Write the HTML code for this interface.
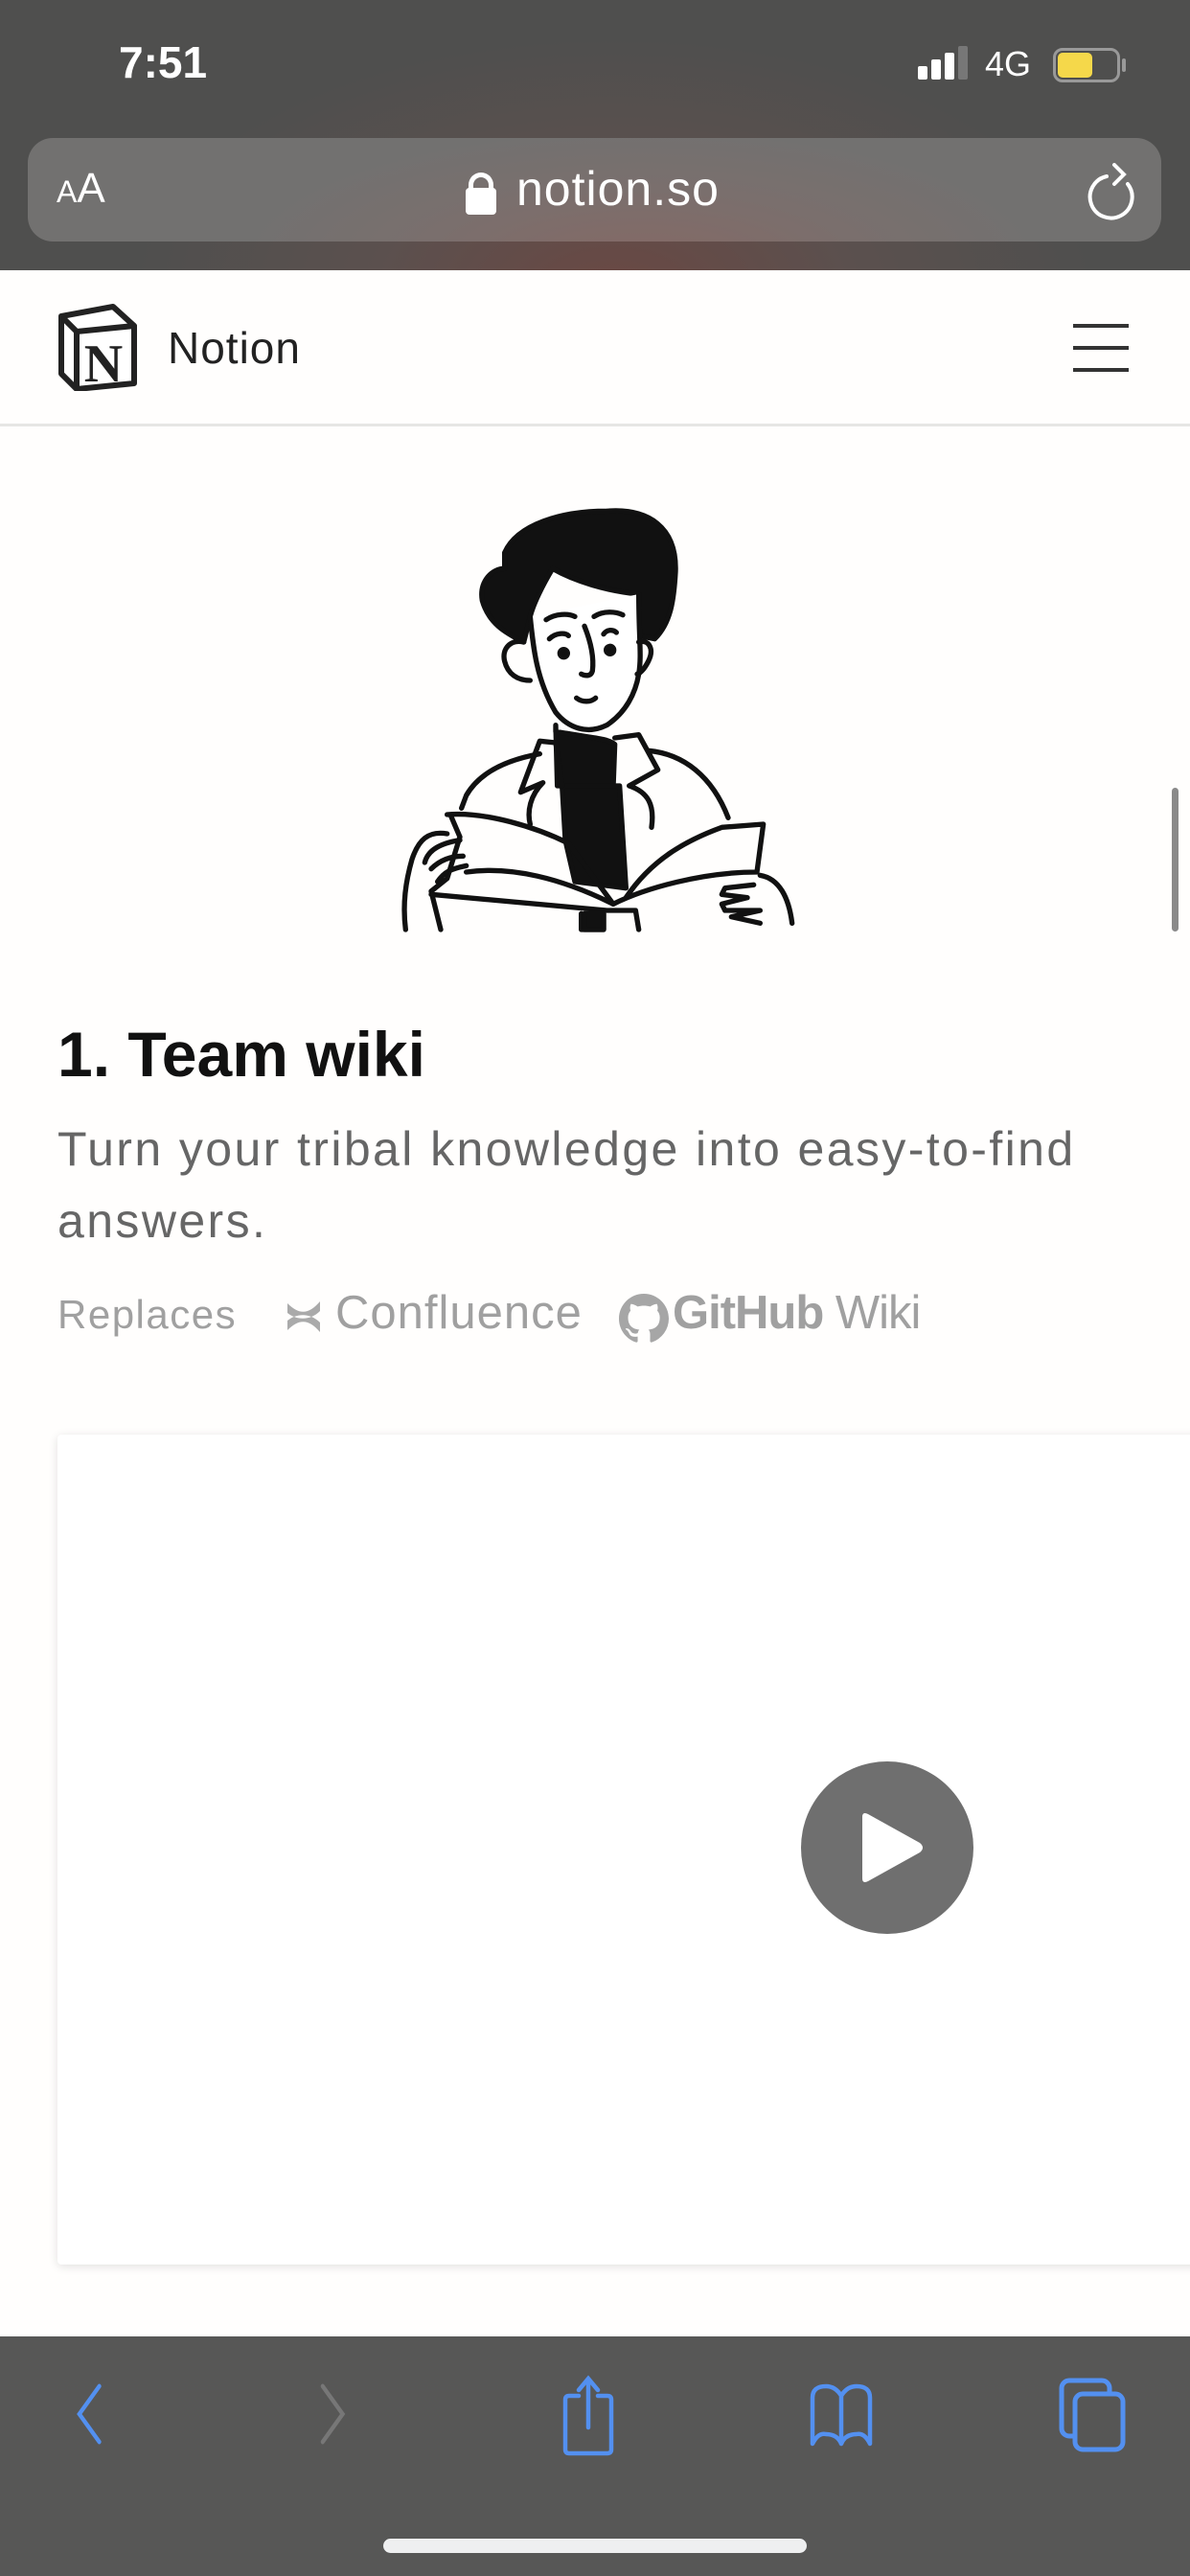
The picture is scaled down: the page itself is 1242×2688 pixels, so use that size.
<!DOCTYPE html>
<html><head><meta charset="utf-8">
<style>
*{margin:0;padding:0;box-sizing:border-box}
body{width:1242px;height:2688px;position:relative;overflow:hidden;background:#fffefd;font-family:"Liberation Sans",Arial,sans-serif}
.abs{position:absolute}
#top{left:0;top:0;width:1242px;height:282px;background:radial-gradient(ellipse 500px 260px at 640px 300px,#6a4843 0%,#5b504e 50%,#4f4f4e 100%)}
#url{left:29px;top:144px;width:1183px;height:108px;border-radius:26px;background:radial-gradient(ellipse 420px 140px at 640px 130px,#856965 0%,#7a6f6d 55%,#727170 100%)}
</style></head><body>
<div id="top" class="abs">
  <div class="abs" style="left:124px;top:38px;color:#fff;font-size:46px;font-weight:bold;">7:51</div>
  <div class="abs" style="left:958px;top:69px;width:10px;height:14px;background:#fff;border-radius:2px"></div>
  <div class="abs" style="left:972px;top:62px;width:10px;height:21px;background:#fff;border-radius:2px"></div>
  <div class="abs" style="left:986px;top:55px;width:10px;height:28px;background:#fff;border-radius:2px"></div>
  <div class="abs" style="left:1000px;top:48px;width:10px;height:35px;background:#777;border-radius:2px"></div>
  <div class="abs" style="left:1028px;top:46px;color:#fff;font-size:36px;">4G</div>
  <div class="abs" style="left:1099px;top:50px;width:70px;height:36px;border:3px solid #999;border-radius:10px"></div>
  <div class="abs" style="left:1104px;top:55px;width:36px;height:26px;background:#f5d84a;border-radius:5px"></div>
  <div class="abs" style="left:1171px;top:61px;width:4px;height:14px;background:#999;border-radius:2px"></div>
  <div id="url" class="abs">
    <div class="abs" style="left:30px;top:28px;color:#fff;font-size:44px;"><span style="font-size:32px">A</span>A</div>
    <div class="abs" style="left:460px;top:36px;width:26px;height:20px;border:5px solid #fff;border-bottom:none;border-radius:13px 13px 0 0"></div>
    <div class="abs" style="left:457px;top:52px;width:32px;height:28px;background:#fff;border-radius:4px"></div>
    <div class="abs" style="left:510px;top:24px;color:#fff;font-size:50px;letter-spacing:1px">notion.so</div>
    <svg class="abs" style="left:1106px;top:26px" width="56" height="64" viewBox="0 0 56 64"><path d="M20 14 A22 22 0 1 0 42 22" fill="none" stroke="#fff" stroke-width="4" stroke-linecap="round"/><path d="M28 2 L38 12 L28 22" fill="none" stroke="#fff" stroke-width="4" stroke-linecap="round"/></svg>
  </div>
</div>
<div class="abs" style="left:0;top:282px;width:1242px;height:163px;background:#fffefd;border-bottom:3px solid #e6e6e4"></div>
<svg class="abs" style="left:60px;top:316px" width="84" height="92" viewBox="0 0 84 92">
  <path d="M4 14 L58 4 L80 24 L80 84 L20 90 L4 74 Z" fill="#fff" stroke="#222" stroke-width="6" stroke-linejoin="round"/>
  <path d="M4 14 L20 30 L80 24 M20 30 L20 90" fill="none" stroke="#222" stroke-width="6"/>
  <text x="48" y="82" text-anchor="middle" font-family="Liberation Serif,serif" font-weight="bold" font-size="56" fill="#222">N</text>
</svg>
<div class="abs" style="left:175px;top:336px;font-size:46px;color:#222;letter-spacing:1px">Notion</div>
<div class="abs" style="left:1120px;top:338px;width:58px;height:4px;background:#333"></div>
<div class="abs" style="left:1120px;top:361px;width:58px;height:4px;background:#333"></div>
<div class="abs" style="left:1120px;top:384px;width:58px;height:4px;background:#333"></div>
<div class="abs" style="left:1223px;top:822px;width:7px;height:150px;background:#8a8a8a;border-radius:4px"></div>

<svg class="abs" style="left:400px;top:510px" width="440" height="470" viewBox="0 0 1320 1410" fill="none" stroke="#111" stroke-width="16" stroke-linecap="round" stroke-linejoin="round">
  <path d="M380 200 C420 110 560 70 700 70 C830 60 920 120 915 260 C910 350 900 420 850 470 L800 460 L800 330 C700 320 600 290 530 250 C500 300 470 360 460 400 L440 480 C380 450 330 420 310 350 C300 290 340 250 380 250 Z" fill="#111"/>
  <path d="M460 400 C470 500 480 600 540 700 C580 750 640 770 700 740 C760 700 790 640 800 580 C810 520 800 470 800 330" fill="#fff"/>
  <path d="M440 480 C400 470 370 500 380 540 C390 580 420 600 460 600 M800 480 C830 470 850 500 830 540 C815 570 800 580 795 580"/>
  <path d="M510 410 C540 390 580 390 600 400 M660 400 C690 380 730 385 750 395 M520 470 C540 450 570 450 580 460 M690 455 C700 440 720 440 730 450"/>
  <circle cx="565" cy="515" r="12" fill="#111"/><circle cx="710" cy="505" r="12" fill="#111"/>
  <path d="M630 430 C650 480 660 530 655 570 C650 590 630 585 620 580 M605 655 C625 670 650 668 665 655"/>
  <path d="M540 740 L545 930 L720 935 L725 800 C700 780 650 780 540 760 Z" fill="#111"/>
  <path d="M560 930 L570 1100 L600 1230 L760 1250 L740 930 Z" fill="#111"/>
  <path d="M490 790 L540 795 L560 930 M725 780 L800 770 L860 880 L770 930 C830 950 850 990 840 1060 M490 790 L430 950 L500 920 C460 960 450 1010 460 1050"/>
  <path d="M490 830 C380 850 300 890 260 960 L245 1000 M830 820 C940 830 1030 900 1080 1030"/>
  <path d="M200 1020 C320 1010 480 1060 580 1110 L720 1300 M210 1020 L240 1090 L200 1220 L150 1260 L180 1380"/>
  <path d="M260 1200 C400 1180 560 1220 720 1300 C820 1250 1000 1200 1170 1200 L1190 1050 L1060 1060 C950 1100 840 1160 760 1280"/>
  <path d="M150 1270 L700 1320 L790 1320 L800 1380 M620 1330 L620 1380 L690 1380 L690 1330" />
  <path d="M630 1330 L690 1330 L690 1380 L630 1380 Z" fill="#111"/>
  <path d="M200 1080 C140 1070 110 1100 90 1160 C70 1230 60 1300 70 1380 M240 1100 C180 1110 140 1130 130 1170 M250 1150 C200 1150 170 1170 150 1190 M260 1180 C210 1190 190 1200 170 1230"/>
  <path d="M1180 1210 C1240 1220 1270 1280 1280 1360 M1160 1240 L1070 1250 L1060 1270 L1140 1280 L1060 1300 L1070 1320 L1180 1320 L1090 1340 L1180 1360"/>
</svg>

<div class="abs" style="left:60px;top:1062px;font-size:66px;font-weight:bold;color:#111;">1. Team wiki</div>
<div class="abs" style="left:60px;top:1162px;width:1160px;font-size:50px;line-height:75px;color:#666;letter-spacing:2.4px">Turn your tribal knowledge into easy-to-find answers.</div>
<div class="abs" style="left:60px;top:1348px;font-size:42px;color:#a0a0a0;letter-spacing:1.5px">Replaces</div>
<svg class="abs" style="left:296px;top:1352px" width="42" height="44" viewBox="0 0 42 44"><path d="M4 8 C16 20 26 20 38 6 L38 16 C28 26 14 26 4 18 Z M4 36 C16 24 26 24 38 38 L38 28 C28 18 14 18 4 26 Z" fill="#aaa"/></svg>
<div class="abs" style="left:350px;top:1342px;font-size:49px;color:#a0a0a0;letter-spacing:1px">Confluence</div>
<svg class="abs" style="left:646px;top:1350px" width="52" height="52" viewBox="0 0 16 16"><path fill="#a6a6a6" d="M8 0C3.58 0 0 3.58 0 8c0 3.54 2.29 6.53 5.47 7.59.4.07.55-.17.55-.38 0-.19-.01-.82-.01-1.490-2.01.37-2.53-.49-2.69-.94-.09-.23-.48-.94-.82-1.130-.28-.15-.68-.52-.01-.53.63-.01 1.08.58 1.23.82.72 1.21 1.87.87 2.33.66.07-.52.28-.87.51-1.07-1.780-.2-3.640-.89-3.640-3.950 0-.87.31-1.59.82-2.150-.08-.2-.36-1.02.08-2.120 0 0 .67-.21 2.2.82.64-.18 1.32-.27 2-.27.68 0 1.36.09 2 .27 1.53-1.04 2.2-.82 2.2-.82.44 1.1.16 1.92.08 2.12.51.56.82 1.27.82 2.15 0 3.07-1.87 3.75-3.65 3.95.29.25.54.73.54 1.48 0 1.07-.01 1.93-.01 2.2 0 .21.15.46.55.38A8.013 8.013 0 0016 8c0-4.42-3.58-8-8-8z"/></svg>
<div class="abs" style="left:702px;top:1342px;font-size:49px;color:#a0a0a0;letter-spacing:-1px"><b>GitHub</b> Wiki</div>

<div class="abs" style="left:60px;top:1497px;width:1200px;height:866px;background:#fff;box-shadow:0 2px 10px rgba(0,0,0,0.12);border-radius:4px"></div>
<div class="abs" style="left:836px;top:1838px;width:180px;height:180px;border-radius:50%;background:#6f6f6f"></div>
<svg class="abs" style="left:896px;top:1890px" width="70" height="76" viewBox="0 0 70 76"><path d="M4 6 Q4 0 10 3 L64 33 Q70 38 64 43 L10 73 Q4 76 4 70 Z" fill="#fff"/></svg>

<div class="abs" style="left:0;top:2438px;width:1242px;height:250px;background:radial-gradient(ellipse 130px 160px at 660px 2688px,#3a3a3a 0%,#545453 60%,#575756 100%)">
  <svg class="abs" style="left:70px;top:48px" width="40" height="66" viewBox="0 0 40 66"><path d="M34 4 L8 33 L34 62" fill="none" stroke="#5390f0" stroke-width="5" stroke-linecap="round" transform="scale(0.8,1) translate(8,0)"/></svg>
  <svg class="abs" style="left:332px;top:48px" width="40" height="66" viewBox="0 0 40 66"><path d="M6 4 L32 33 L6 62" fill="none" stroke="#777" stroke-width="5" stroke-linecap="round" transform="scale(0.8,1)"/></svg>
  <svg class="abs" style="left:584px;top:40px" width="60" height="86" viewBox="0 0 60 86"><path d="M20 22 L10 22 Q6 22 6 26 L6 78 Q6 82 10 82 L50 82 Q54 82 54 78 L54 26 Q54 22 50 22 L40 22 M30 55 L30 4 M20 16 L30 4 L40 16" fill="none" stroke="#5390f0" stroke-width="4.5" stroke-linecap="round"/></svg>
  <svg class="abs" style="left:844px;top:48px" width="68" height="70" viewBox="0 0 68 70"><path d="M34 14 Q28 4 18 4 Q4 4 4 16 L4 64 Q10 52 18 54 Q30 54 34 64 Q38 54 50 54 Q58 52 64 64 L64 16 Q64 4 50 4 Q40 4 34 14 L34 64" fill="none" stroke="#5390f0" stroke-width="4.5" stroke-linejoin="round"/></svg>
  <svg class="abs" style="left:1104px;top:42px" width="72" height="80" viewBox="0 0 72 80"><rect x="4" y="4" width="50" height="58" rx="8" fill="none" stroke="#5390f0" stroke-width="5"/><rect x="18" y="18" width="50" height="58" rx="8" fill="#565655" stroke="#5390f0" stroke-width="5"/></svg>
  <div class="abs" style="left:400px;top:211px;width:442px;height:15px;border-radius:8px;background:#eeeff0"></div>
</div>
</body></html>
